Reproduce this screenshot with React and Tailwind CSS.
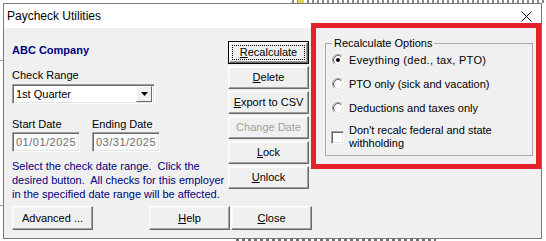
import React from 'react';

const FONT = "font-['Liberation_Sans',Arial,sans-serif]";

function WinButton({ children, isDefault, disabled, className = '' }) {
  const face = (
    <div className="flex flex-1 self-stretch border border-t-white border-l-white border-r-[#696969] border-b-[#696969] shadow-[inset_-1px_-1px_0_#a0a0a0,inset_1px_1px_0_#f8f8f8] bg-[#f0f0f0]">
      {isDefault ? (
        <div className="m-[2px] flex flex-1 items-center justify-center border border-dotted border-black">
          {children}
        </div>
      ) : (
        <div className="flex flex-1 items-center justify-center">{children}</div>
      )}
    </div>
  );
  return (
    <div
      className={`flex h-[23px] w-[81px] text-[11px] leading-[13px] ${
        disabled ? 'text-[#a0a0a0]' : 'text-black'
      } ${isDefault ? 'border border-black' : ''} ${className}`}
    >
      {face}
    </div>
  );
}

function U({ children }) {
  return <span className="underline underline-offset-[1px]">{children}</span>;
}

function Radio({ checked }) {
  return (
    <svg width="12" height="12" viewBox="0 0 12 12" className="shrink-0">
      <circle cx="6" cy="6" r="5" fill="#ffffff" />
      <path d="M2.11 9.89 A5.5 5.5 0 0 1 9.89 2.11" fill="none" stroke="#a0a0a0" strokeWidth="1" />
      <path d="M9.89 2.11 A5.5 5.5 0 0 1 2.11 9.89" fill="none" stroke="#ffffff" strokeWidth="1" />
      <path d="M2.82 9.18 A4.5 4.5 0 0 1 9.18 2.82" fill="none" stroke="#696969" strokeWidth="1" />
      <path d="M9.18 2.82 A4.5 4.5 0 0 1 2.82 9.18" fill="none" stroke="#e3e3e3" strokeWidth="1" />
      {checked && <circle cx="6" cy="6" r="2" fill="#000000" />}
    </svg>
  );
}

function Sunken({ className = '', children }) {
  return (
    <div
      className={`border border-t-[#a0a0a0] border-l-[#a0a0a0] border-b-white border-r-white shadow-[inset_1px_1px_0_#696969,inset_-1px_-1px_0_#e3e3e3] ${className}`}
    >
      {children}
    </div>
  );
}

export default function App() {
  return (
    <div className={`relative h-[241px] w-[546px] overflow-hidden bg-white ${FONT}`}>
      {/* bits of the window behind the dialog */}
      <div className="absolute left-[292px] top-0 h-[3px] w-[254px] bg-[repeating-linear-gradient(90deg,#555_0_2px,transparent_2px_5px)] opacity-70" />
      <div className="absolute left-[298px] top-0 h-[3px] w-[6px] bg-[#e8d44a]" />
      <div className="absolute left-0 top-[60px] h-px w-[3px] bg-[#a0a0a0]" />
      <div className="absolute left-0 top-[205px] h-px w-[3px] bg-[#a0a0a0]" />
      <div className="absolute left-[236px] top-[239px] h-[2px] w-[200px] bg-[repeating-linear-gradient(90deg,#333_0_3px,transparent_3px_6px)] opacity-70" />

      {/* dialog window */}
      <div className="absolute left-[3px] top-[3px] flex h-[236px] w-[539px] flex-col border border-[#7a7a7a] bg-[#f0f0f0]">
        <div className="flex h-[24px] items-center justify-between bg-white pl-[3px] pr-[9px]">
          <span className="text-[12px] leading-[14px] text-black">Paycheck Utilities</span>
          <svg width="11" height="11" viewBox="0 0 11 11">
            <path d="M0.5 0.5 L10.5 10.5 M10.5 0.5 L0.5 10.5" stroke="#000" strokeWidth="1" />
          </svg>
        </div>

        <div className="flex flex-1 flex-col px-[8px] text-[11px] leading-[14px] text-black">
          <div className="flex h-[178px]">
            {/* left column */}
            <div className="flex w-[148px] flex-col pt-[15px]">
              <div className="font-bold text-[#000080]">ABC Company</div>
              <div className="mt-[11px]">Check Range</div>
              <Sunken className="mt-[2px] flex h-[20px] w-[143px] items-center bg-white pl-[3px] pr-[2px]">
                <span className="flex-1">1st Quarter</span>
                <div className="flex h-[16px] w-[16px] items-center justify-center border border-t-white border-l-white border-r-[#696969] border-b-[#696969] bg-[#f0f0f0]">
                  <svg width="7" height="4" viewBox="0 0 7 4">
                    <path d="M0 0 H7 L3.5 4 Z" fill="#000" />
                  </svg>
                </div>
              </Sunken>
              <div className="mt-[13px] flex">
                <span className="w-[80px]">Start Date</span>
                <span>Ending Date</span>
              </div>
              <div className="mt-[1px] flex gap-[12px]">
                <Sunken className="flex h-[20px] w-[68px] items-center bg-[#fbfbfb] pl-[3px] tracking-[0.5px] text-[#6d6d6d]">
                  01/01/2025
                </Sunken>
                <Sunken className="flex h-[20px] w-[68px] items-center bg-[#fbfbfb] pl-[3px] tracking-[0.5px] text-[#6d6d6d]">
                  03/31/2025
                </Sunken>
              </div>
              <div className="mt-[7px] w-[200px] whitespace-pre text-[#000080]">
                {'Select the check date range.  Click the\ndesired button.  All checks for this employer\nin the specified date range will be affected.'}
              </div>
            </div>

            {/* action buttons */}
            <div className="ml-[68px] flex flex-col gap-[2px] pt-[13px]">
              <WinButton isDefault>
                <span><U>R</U>ecalculate</span>
              </WinButton>
              <WinButton>
                <span><U>D</U>elete</span>
              </WinButton>
              <WinButton>
                <span><U>E</U>xport to CSV</span>
              </WinButton>
              <WinButton disabled>
                <span>Change Date</span>
              </WinButton>
              <WinButton>
                <span><U>L</U>ock</span>
              </WinButton>
              <WinButton>
                <span><U>U</U>nlock</span>
              </WinButton>
            </div>

            {/* options group */}
            <div className="ml-[16px] pt-[8px]">
              <fieldset className="h-[120px] w-[208px] border border-[#a9a9a9]">
                <legend className="ml-[6px] px-[2px] leading-[14px]">Recalculate Options</legend>
                <div className="-mt-[2px] flex flex-col">
                  <div className="flex h-[24px] items-center gap-[5px] pl-[6px]">
                    <Radio checked />
                    <span className="tracking-[0.3px]">Eveything (ded., tax, PTO)</span>
                  </div>
                  <div className="flex h-[24px] items-center gap-[5px] pl-[6px]">
                    <Radio />
                    <span>PTO only (sick and vacation)</span>
                  </div>
                  <div className="flex h-[24px] items-center gap-[5px] pl-[6px]">
                    <Radio />
                    <span>Deductions and taxes only</span>
                  </div>
                  <div className="mt-[4px] flex items-center gap-[5px] pl-[5px]">
                    <Sunken className="h-[13px] w-[13px] shrink-0 bg-white" />
                    <span className="leading-[13px]">
                      Don't recalc federal and state
                      <br />
                      withholding
                    </span>
                  </div>
                </div>
              </fieldset>
            </div>
          </div>

          {/* bottom buttons */}
          <div className="flex">
            <WinButton className="h-[24px] w-[80px]">
              <span>Advanced ...</span>
            </WinButton>
            <WinButton className="ml-[56px] h-[24px] w-[80px]">
              <span><U>H</U>elp</span>
            </WinButton>
            <WinButton className="ml-[1px] h-[24px] w-[80px]">
              <span><U>C</U>lose</span>
            </WinButton>
          </div>
        </div>
      </div>

      {/* red annotation frame */}
      <div className="absolute left-[311px] top-[23px] h-[146px] w-[230px] border-[5px] border-[#e4202a]" />
    </div>
  );
}
